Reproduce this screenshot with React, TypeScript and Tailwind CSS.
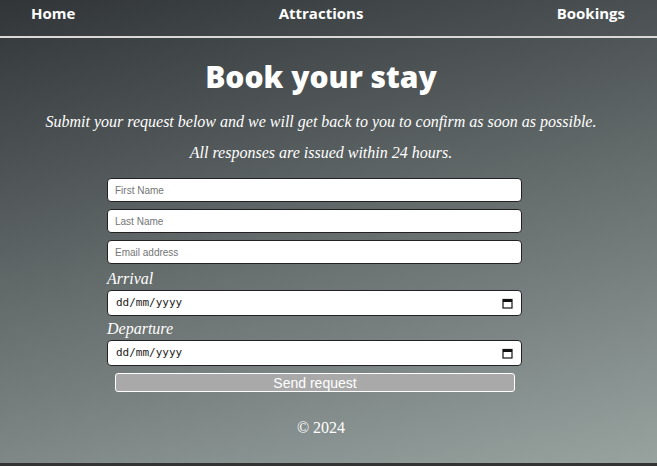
import React from 'react';

const serif = { fontFamily: '"Liberation Serif", "DejaVu Serif", serif' };

const fields = ['First Name', 'Last Name', 'Email address'];

function CalendarIcon() {
  return (
    <svg width="11" height="11" viewBox="0 0 11 11" className="shrink-0">
      <rect x="1" y="1.5" width="9" height="8.5" fill="none" stroke="#111" strokeWidth="1.2" />
      <rect x="1" y="1.5" width="9" height="2.5" fill="#111" />
    </svg>
  );
}

function DateField({ label }: { label: string }) {
  return (
    <div className="flex flex-col">
      <label className="text-[16px] italic leading-[18px] text-white" style={serif}>
        {label}
      </label>
      <div className="mt-[2px] flex h-[26px] w-[415px] items-center justify-between rounded-[4px] border border-[#222] bg-white pl-[8px] pr-[8px]">
        <span className="text-[11px] text-[#222]" style={{ fontFamily: '"DejaVu Sans Mono", monospace' }}>
          dd/mm/yyyy
        </span>
        <CalendarIcon />
      </div>
    </div>
  );
}

export default function App() {
  return (
    <div className="h-[466px] w-[657px] overflow-hidden bg-[#333]">
      <div className="flex h-[463px] flex-col bg-[linear-gradient(167deg,#313538,#98a3a0)]">
        <nav
          className="flex h-[38px] items-start justify-between border-b-2 border-[#d9d9d9] pl-[31px] pr-[32px] pt-[2px] text-[15px] font-bold text-white"
          style={{ fontFamily: '"Open Sans", sans-serif' }}
        >
          <a>Home</a>
          <a className="ml-[10px]">Attractions</a>
          <a>Bookings</a>
        </nav>
        <main className="flex w-[642px] flex-col items-center">
          <h1
            className="mt-[19px] text-[30px] font-extrabold leading-[40px] text-white"
            style={{ fontFamily: '"Open Sans", sans-serif' }}
          >
            Book your stay
          </h1>
          <p className="mt-[13px] text-[16px] italic text-white" style={serif}>
            Submit your request below and we will get back to you to confirm as soon as possible.
          </p>
          <p className="mt-[7px] text-[16px] italic text-white" style={serif}>
            All responses are issued within 24 hours.
          </p>
        </main>
        <form className="ml-[107px] mt-[13px] flex w-[415px] flex-col gap-[7px]">
          {fields.map((f) => (
            <input
              key={f}
              placeholder={f}
              className="h-[24px] w-[415px] rounded-[4px] border border-[#222] bg-white px-[7px] text-[10px] text-[#222] placeholder:text-[#757575]"
              style={{ fontFamily: '"Liberation Sans", Arial, sans-serif' }}
            />
          ))}
          <div className="-mt-[1px] flex flex-col gap-[4px]">
            <DateField label="Arrival" />
            <DateField label="Departure" />
          </div>
          <button
            type="button"
            className="ml-[8px] h-[19px] w-[400px] rounded-[3px] border border-white bg-[#a9a9a9] text-[14px] leading-[16px] text-white"
            style={{ fontFamily: '"Liberation Sans", Arial, sans-serif' }}
          >
            Send request
          </button>
        </form>
        <footer className="mt-[24px] w-[642px] text-center text-[16px] text-white" style={serif}>
          © 2024
        </footer>
      </div>
    </div>
  );
}
